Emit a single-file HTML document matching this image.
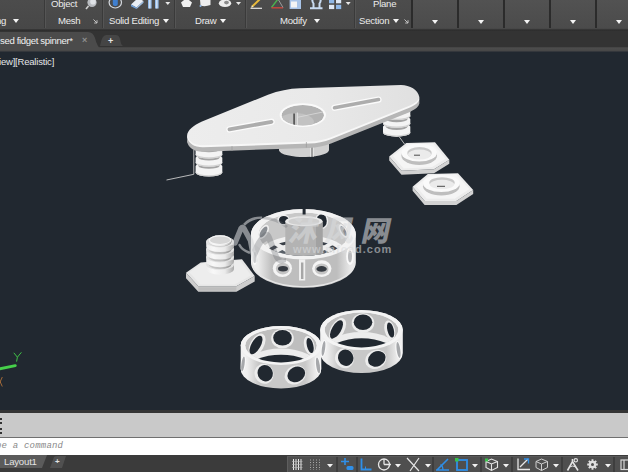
<!DOCTYPE html>
<html><head><meta charset="utf-8">
<style>
html,body{margin:0;padding:0;}
body{width:628px;height:472px;overflow:hidden;position:relative;background:#212830;font-family:"Liberation Sans",sans-serif;}
.abs{position:absolute;}
#ribbon{left:0;top:0;width:628px;height:29px;background:linear-gradient(#4c4c4c,#474747);}
#collapsed{left:412px;top:0;width:216px;height:28px;background:linear-gradient(#525252,#4b4b4b);}
#ribline{left:0;top:29px;width:628px;height:2px;background:linear-gradient(#3a3a3a,#2b2b2b);}
#tabbar{left:0;top:31px;width:628px;height:17px;background:#333;}
#tabline{left:0;top:47px;width:628px;height:5px;background:linear-gradient(#404040,#4c4c4c 25%,#484848 70%,#2a2f36);}
.sep{position:absolute;top:0;width:1px;height:28px;background:#3a3a3a;box-shadow:1px 0 0 #555;}
.sepd{position:absolute;top:0;width:2px;height:28px;background:#2b2b2b;}
.lbl{position:absolute;top:15px;color:#ececec;font-size:9.6px;line-height:12px;white-space:nowrap;letter-spacing:-0.25px;}
.top{top:-2px;}
.tri{position:absolute;width:0;height:0;border-left:3px solid transparent;border-right:3px solid transparent;border-top:4px solid #f4f4f4;}
.stri{position:absolute;width:0;height:0;border-left:2.5px solid transparent;border-right:2.5px solid transparent;border-top:3px solid #e8e8e8;}
#acttab{left:0px;top:32px;width:130px;height:18px;}
#tabtxt{left:0px;top:34px;color:#f0f0f0;font-size:9.6px;line-height:13px;white-space:nowrap;letter-spacing:-0.36px;}
#vlabel{left:-1px;top:56px;color:#e4e6e8;font-size:9.5px;line-height:12px;white-space:nowrap;letter-spacing:-0.2px;}
#cmdhist{left:0;top:410px;width:628px;height:27px;background:#c9c9c9;border-top:3px solid #343434;box-sizing:border-box;}
#cmdline{left:0;top:437px;width:628px;height:18px;background:#fff;border-top:1px solid #707070;box-sizing:border-box;}
#cmdtxt{left:-4px;top:440px;color:#8a8a8a;font-size:9px;line-height:12px;font-family:"Liberation Mono",monospace;font-style:italic;white-space:nowrap;letter-spacing:0.2px;}
#status{left:0;top:455px;width:628px;height:17px;background:#3b3b3b;}
</style></head><body>
<div id="ribbon" class="abs"></div>
<div id="collapsed" class="abs"></div>
<div class="sep" style="left:44px"></div>
<div class="sep" style="left:102px"></div>
<div class="sep" style="left:174px"></div>
<div class="sep" style="left:245px"></div>
<div class="sep" style="left:354px"></div>
<div class="sepd" style="left:411px"></div>
<div class="sepd" style="left:457px"></div>
<div class="sepd" style="left:503px"></div>
<div class="sepd" style="left:549px"></div>
<div class="sepd" style="left:595px"></div>
<div class="lbl" style="left:-4px">ng</div><div class="tri" style="left:13px;top:19px"></div>
<div class="lbl top" style="left:51px">Object</div>
<div class="lbl" style="left:58px">Mesh</div>
<div class="lbl" style="left:109px">Solid Editing</div><div class="tri" style="left:163px;top:19px"></div>
<div class="lbl" style="left:195px">Draw</div><div class="tri" style="left:220px;top:19px"></div>
<div class="lbl" style="left:280px">Modify</div><div class="tri" style="left:314px;top:19px"></div>
<div class="lbl top" style="left:373px">Plane</div>
<div class="lbl" style="left:359px">Section</div><div class="tri" style="left:393px;top:19px"></div>
<div class="tri" style="left:432px;top:20px"></div>
<div class="tri" style="left:478px;top:20px"></div>
<div class="tri" style="left:524px;top:20px"></div>
<div class="tri" style="left:570px;top:20px"></div>
<div class="tri" style="left:616px;top:20px"></div>
<svg class="abs" style="left:0;top:0" width="628" height="14" viewBox="0 0 628 14">
<!-- object icon -->
<circle cx="92" cy="2.500" r="4.600" fill="#b9bcc0"/><circle cx="93" cy="1.800" r="2.800" fill="#dfe2e6"/><path d="M88.500 6 L86 9" stroke="#d0d0d0" stroke-width="1.600"/>
<!-- solid editing icons -->
<ellipse cx="115.300" cy="2.500" rx="6.200" ry="5.500" fill="none" stroke="#d4d8de" stroke-width="1.200"/><rect x="112.800" y="-2" width="5" height="8" rx="2" fill="#3f7fd0"/>
<path d="M131 4.500 L138 -2 L143.500 1 L136.500 7.500 Z" fill="#e9eef5"/><path d="M131 4.500 L136.500 7.500 L136.500 9 L131 6.200 Z" fill="#6fa2dc"/><path d="M136.500 7.500 L143.500 1 V2.800 L136.500 9 Z" fill="#9fc0e6"/>
<rect x="148" y="-1" width="3.600" height="9.500" fill="#8fb8e8"/><rect x="155" y="-1" width="3.600" height="9.500" fill="#8fb8e8"/><rect x="149.200" y="-1" width="1.200" height="9.500" fill="#dfeaf7"/><rect x="156.200" y="-1" width="1.200" height="9.500" fill="#dfeaf7"/>
<path d="M165.300 2h5l-2.500 3z" fill="#e8e8e8"/>
<!-- draw icons -->
<path d="M181 2.500 L186.500 -2 L192 2.500 L190 7 H183 Z" fill="#f1f1f1"/>
<path d="M200 -1 H210.500 V5 Q205 7 200.500 5.500 Z" fill="#ededed"/><circle cx="200.500" cy="6" r="1" fill="#8fb8e8"/>
<ellipse cx="225" cy="3.300" rx="6.200" ry="3.800" fill="#ededed"/><ellipse cx="226.500" cy="2.600" rx="2.400" ry="1.800" fill="#8b8b8b"/>
<path d="M236 2h5l-2.500 3z" fill="#e8e8e8"/>
<!-- modify icons -->
<path d="M252 6.800 L260.500 -1.500" stroke="#e8b93a" stroke-width="2"/><path d="M250.500 8.300 H262" stroke="#e6e6e6" stroke-width="1.200"/><path d="M251 7.800 L253.500 6.800 L252 5.300 Z" fill="#f3e6c0"/>
<path d="M271.500 7.500 L278 -1" stroke="#4bb14f" stroke-width="1.400"/><path d="M271.500 7.800 H283" stroke="#c9473d" stroke-width="1.400"/><path d="M278 -1 L283 7.500" stroke="#9c9c9c" stroke-width="1"/>
<rect x="289.600" y="-1" width="11.400" height="10" fill="#a9c4e8"/><rect x="291" y="1.500" width="6" height="6" fill="#f4f4f4"/>
<path d="M310 8.300 H322.500 M313.500 8 V3.500 Q311.500 1 313 -2 M319.500 8 V3.500 Q321.500 1 320 -2" stroke="#c9dcf2" stroke-width="2" fill="none"/>
<rect x="329" y="-1" width="5.200" height="4.300" fill="#8fb8e8"/><rect x="336" y="-1" width="5.200" height="4.300" fill="#dfe9f6"/><rect x="329" y="4.800" width="5.200" height="4.300" fill="#dfe9f6"/><rect x="336" y="4.800" width="5.200" height="4.300" fill="#8fb8e8"/>
<path d="M345.700 2h5l-2.500 3z" fill="#e8e8e8"/>
</svg>
<svg class="abs" style="left:80px;top:16px" width="360" height="12" viewBox="80 16 360 12"><path d="M93.500 19.500 L96.800 22.800 M97 20.200 V23 H94.200" stroke="#cfcfcf" stroke-width="0.9" fill="none"/><path d="M404.500 19.500 L407.800 22.800 M408 20.200 V23 H405.200" stroke="#cfcfcf" stroke-width="0.9" fill="none"/></svg>
<div id="ribline" class="abs"></div>
<div id="tabbar" class="abs"></div>
<div id="tabline" class="abs"></div>
<svg id="acttab" class="abs" viewBox="0 0 130 18"><path d="M0 0 H88 Q93 0 95 6 Q97 15 102 18 H0 Z" fill="#4b4b4b"/><path d="M100 14 Q102 3 106 3 H116 Q119 3 120 7 Q121 13 123 14 Z" fill="#454545" transform="translate(0,0)"/></svg>
<div id="tabtxt" class="abs">sed fidget spinner*</div>
<div class="abs" style="left:82px;top:34px;color:#8f8f8f;font-size:9px;line-height:13px;font-weight:bold">×</div>
<div class="abs" style="left:108px;top:35px;color:#e8e8e8;font-size:9px;line-height:13px;font-weight:bold">+</div>
<div id="vlabel" class="abs">iew][Realistic]</div>
<svg class="abs" style="left:0;top:51px" width="628" height="359" viewBox="0 51 628 359">
<defs><linearGradient id="fr" x1="0" x2="1" y1="0" y2="0"><stop offset="0" stop-color="#f0f0f0"/><stop offset="0.07" stop-color="#ebebeb"/><stop offset="0.2" stop-color="#bebebe"/><stop offset="0.82" stop-color="#bebebe"/><stop offset="0.94" stop-color="#e6e6e6"/><stop offset="1" stop-color="#ededed"/></linearGradient><linearGradient id="fr2" x1="0" x2="1" y1="0" y2="0"><stop offset="0" stop-color="#f2f2f2"/><stop offset="0.08" stop-color="#eeeeee"/><stop offset="0.22" stop-color="#c8c8c8"/><stop offset="0.8" stop-color="#c8c8c8"/><stop offset="0.93" stop-color="#ececec"/><stop offset="1" stop-color="#f2f2f2"/></linearGradient></defs>
<path d="M166.500 180 L193.800 174.300 V150" fill="none" stroke="#c9c9c9" stroke-width="0.9"/>
<path d="M399.400 137 L404.500 144" fill="none" stroke="#c9c9c9" stroke-width="0.9"/>
<path d="M195.6 165.9 A13.4 4.0 0 0 1 222.3 165.9 V172.8 A13.4 4.0 0 0 1 195.6 172.8 Z" fill="#f4f4f4"/>
<path d="M195.6 171.6 A13.4 4.0 0 0 0 222.3 171.6 V172.8 A13.4 4.0 0 0 1 195.6 172.8 Z" fill="#d2d2d2"/>
<path d="M198.3 162.1 H219.6 V165.9 A10.7 3.2 0 0 1 198.3 165.9 Z" fill="#a3a3a3"/>
<path d="M195.6 157.7 A13.4 4.0 0 0 1 222.3 157.7 V163.1 A13.4 4.0 0 0 1 195.6 163.1 Z" fill="#f4f4f4"/>
<path d="M195.6 161.9 A13.4 4.0 0 0 0 222.3 161.9 V163.1 A13.4 4.0 0 0 1 195.6 163.1 Z" fill="#d2d2d2"/>
<path d="M198.3 153.9 H219.6 V157.7 A10.7 3.2 0 0 1 198.3 157.7 Z" fill="#a3a3a3"/>
<path d="M195.6 149.4 A13.4 4.0 0 0 1 222.3 149.4 V154.9 A13.4 4.0 0 0 1 195.6 154.9 Z" fill="#f4f4f4"/>
<path d="M195.6 153.7 A13.4 4.0 0 0 0 222.3 153.7 V154.9 A13.4 4.0 0 0 1 195.6 154.9 Z" fill="#d2d2d2"/>
<path d="M198.3 145.6 H219.6 V149.4 A10.7 3.2 0 0 1 198.3 149.4 Z" fill="#a3a3a3"/>
<path d="M383.0 126.6 A13.7 4.1 0 0 1 410.3 126.6 V132.9 A13.7 4.1 0 0 1 383.0 132.9 Z" fill="#f4f4f4"/>
<path d="M383.0 131.7 A13.7 4.1 0 0 0 410.3 131.7 V132.9 A13.7 4.1 0 0 1 383.0 132.9 Z" fill="#d2d2d2"/>
<path d="M385.7 123.0 H407.6 V126.6 A10.9 3.3 0 0 1 385.7 126.6 Z" fill="#a3a3a3"/>
<path d="M383.0 118.9 A13.7 4.1 0 0 1 410.3 118.9 V124.0 A13.7 4.1 0 0 1 383.0 124.0 Z" fill="#f4f4f4"/>
<path d="M383.0 122.8 A13.7 4.1 0 0 0 410.3 122.8 V124.0 A13.7 4.1 0 0 1 383.0 124.0 Z" fill="#d2d2d2"/>
<path d="M385.7 115.3 H407.6 V118.9 A10.9 3.3 0 0 1 385.7 118.9 Z" fill="#a3a3a3"/>
<path d="M383.0 111.3 A13.7 4.1 0 0 1 410.3 111.3 V116.3 A13.7 4.1 0 0 1 383.0 116.3 Z" fill="#f4f4f4"/>
<path d="M383.0 115.1 A13.7 4.1 0 0 0 410.3 115.1 V116.3 A13.7 4.1 0 0 1 383.0 116.3 Z" fill="#d2d2d2"/>
<path d="M385.7 107.7 H407.6 V111.3 A10.9 3.3 0 0 1 385.7 111.3 Z" fill="#a3a3a3"/>
<path d="M279 146 V150.500 A25 7 0 0 0 329 149.500 V138 Z" fill="#d0d0d0"/>
<path d="M310.800 146 V157 M313.200 146 V157" stroke="#f4f4f4" stroke-width="0.8"/><path d="M312 146 V157" stroke="#7a7a7a" stroke-width="1.200"/>
<path d="M202.0 127.9 L268.0 101.1 Q283.6 95.1 300.0 94.6 L401.0 91.4 C410.0 91.4 418.0 96.4 419.2 102.9 C419.6 105.9 416.0 109.4 410.0 111.9 L331.0 143.6 Q321.0 147.5 309.0 147.9 L203.0 151.7 C194.0 151.8 188.5 147.4 187.3 142.4 C186.3 137.9 193.0 131.9 202.0 127.9 Z" fill="#b6b6b6"/>
<path d="M187.300 136 V142.4 L419.300 103.4 V97 Z" fill="#b6b6b6"/>
<path d="M202.0 123.5 L268.0 96.7 Q283.6 90.7 300.0 90.2 L401.0 87.0 C410.0 87.0 418.0 92.0 419.2 98.5 C419.6 101.5 416.0 105.0 410.0 107.5 L331.0 139.2 Q321.0 143.1 309.0 143.5 L203.0 147.3 C194.0 147.4 188.5 143.0 187.3 138.0 C186.3 133.5 193.0 127.5 202.0 123.5 Z" fill="#f7f7f7"/>
<defs><linearGradient id="pl" x1="0" x2="1" y1="0" y2="0"><stop offset="0" stop-color="#ededed"/><stop offset="0.55" stop-color="#e9e9e9"/><stop offset="1" stop-color="#e0e0e0"/></linearGradient></defs>
<path d="M202.0 121.5 L268.0 94.7 Q283.6 88.7 300.0 88.2 L401.0 85.0 C410.0 85.0 418.0 90.0 419.2 96.5 C419.6 99.5 416.0 103.0 410.0 105.5 L331.0 137.2 Q321.0 141.1 309.0 141.5 L203.0 145.3 C194.0 145.4 188.5 141.0 187.3 136.0 C186.3 131.5 193.0 125.5 202.0 121.5 Z" fill="url(#pl)"/>
<path d="M232 146V151 M306.400 142V147.500" stroke="#9c9c9c" stroke-width="0.7"/>
<clipPath id="ph"><ellipse cx="302.800" cy="115.300" rx="21.200" ry="10.300"/></clipPath>
<ellipse cx="302.800" cy="115.100" rx="23.200" ry="11.900" fill="#fafafa"/>
<g clip-path="url(#ph)"><ellipse cx="302.800" cy="115.300" rx="21.200" ry="10.300" fill="#b3b3b3"/><ellipse cx="296" cy="122" rx="18" ry="9" fill="#c2c2c2"/>
<path d="M294.100 113.500 V125" stroke="#5a5a5a" stroke-width="1.800"/><path d="M297.400 112.500 V125" stroke="#e4e4e4" stroke-width="0.900"/><path d="M297.400 117.300 L323 112" stroke="#dadada" stroke-width="0.800"/></g>
<path d="M229.500 129.400 L271.500 121.800" stroke="#fbfbfb" stroke-width="6.400" stroke-linecap="round"/>
<path d="M229.500 129.400 L271.500 121.800" stroke="#adadad" stroke-width="3.800" stroke-linecap="round"/>
<path d="M334.500 107.800 L378.500 99.600" stroke="#fbfbfb" stroke-width="6.200" stroke-linecap="round"/>
<path d="M334.500 107.800 L378.500 99.600" stroke="#adadad" stroke-width="3.600" stroke-linecap="round"/>
<path d="M389.2 156.5 L389.2 160.5 L401.5 174.8 L434.0 173.2 L449.3 163.7 L449.3 159.7 L434.0 169.2 L401.5 170.8 Z" fill="#d2d2d2"/>
<path d="M389.2 156.5 L406.3 143.0 L435.0 142.2 L449.3 159.7 L434.0 169.2 L401.5 170.8 Z" fill="#ececec"/>
<path d="M392.8 155.9 L407.9 144.1 L433.1 143.4 L445.7 158.8 L432.2 167.1 L403.6 168.5 Z" fill="#f5f5f5"/>
<ellipse cx="419.2" cy="155.5" rx="17.8" ry="9.5" fill="#bebebe" />
<ellipse cx="419.2" cy="152.7" rx="17.8" ry="8.9" fill="#fafafa" />
<ellipse cx="419.5" cy="153.0" rx="12.2" ry="6.0" fill="#c9c9c9" />
<ellipse cx="419.5" cy="154.6" rx="11.6" ry="5.0" fill="#ebebeb" />
<path d="M414 155.2 H420" stroke="#4a4a4a" stroke-width="1"/>
<path d="M412.6 186.8 L412.6 190.8 L424.6 205.0 L456.4 205.0 L473.2 194.0 L473.2 190.0 L456.4 201.0 L424.6 201.0 Z" fill="#d2d2d2"/>
<path d="M412.6 186.8 L427.8 174.0 L458.0 173.2 L473.2 190.0 L456.4 201.0 L424.6 201.0 Z" fill="#ececec"/>
<path d="M416.1 186.3 L429.5 175.0 L456.1 174.3 L469.5 189.1 L454.7 198.8 L426.7 198.8 Z" fill="#f5f5f5"/>
<ellipse cx="441.3" cy="186.2" rx="18.3" ry="9.2" fill="#bebebe" />
<ellipse cx="441.3" cy="183.4" rx="18.3" ry="8.6" fill="#fafafa" />
<ellipse cx="442.0" cy="182.8" rx="12.7" ry="5.6" fill="#c9c9c9" />
<ellipse cx="442.0" cy="184.4" rx="12.1" ry="4.6" fill="#ebebeb" />
<path d="M437 186.3 H445" stroke="#4a4a4a" stroke-width="1"/>
<defs><linearGradient id="cyl" x1="0" x2="1" y1="0" y2="0"><stop offset="0" stop-color="#ececec"/><stop offset="0.25" stop-color="#f8f8f8"/><stop offset="0.68" stop-color="#eaeaea"/><stop offset="1" stop-color="#a9a9a9"/></linearGradient><linearGradient id="cyl2" x1="0" x2="1" y1="0" y2="0"><stop offset="0" stop-color="#c9c9c9"/><stop offset="0.6" stop-color="#bdbdbd"/><stop offset="1" stop-color="#8f8f8f"/></linearGradient></defs>
<path d="M186.0 272.7 L186.0 278.2 L198.3 291.7 L236.4 291.7 L254.7 281.4 L254.7 275.9 L236.4 286.2 L198.3 286.2 Z" fill="#cdcdcd"/>
<path d="M198.3 287.2 H236.4 V290.7 H198.3 Z" fill="#bdbdbd"/>
<path d="M186.0 272.7 L200.7 262.4 L242.0 259.2 L254.7 275.9 L236.4 286.2 L198.3 286.2 Z" fill="#e6e6e6"/>
<path d="M189.4 272.3 L202.6 263.0 L239.8 260.2 L251.2 275.2 L234.7 284.5 L200.4 284.5 Z" fill="#ededed"/>
<path d="M206.2 264.4 A13.9 5.6 0 0 1 234.0 264.4 V269.1 A13.9 5.6 0 0 1 206.2 269.1 Z" fill="url(#cyl)"/>
<ellipse cx="220.1" cy="264.4" rx="13.9" ry="5.6" fill="#e2e2e2" />
<path d="M208.7 260.6 H231.5 V264.4 A11.4 4.6 0 0 1 208.7 264.4 Z" fill="url(#cyl2)"/>
<path d="M206.2 256.9 A13.9 5.6 0 0 1 234.0 256.9 V261.6 A13.9 5.6 0 0 1 206.2 261.6 Z" fill="url(#cyl)"/>
<ellipse cx="220.1" cy="256.9" rx="13.9" ry="5.6" fill="#e2e2e2" />
<path d="M208.7 253.0 H231.5 V256.9 A11.4 4.6 0 0 1 208.7 256.9 Z" fill="url(#cyl2)"/>
<path d="M206.2 249.4 A13.9 5.6 0 0 1 234.0 249.4 V254.0 A13.9 5.6 0 0 1 206.2 254.0 Z" fill="url(#cyl)"/>
<ellipse cx="220.1" cy="249.4" rx="13.9" ry="5.6" fill="#e2e2e2" />
<path d="M208.7 245.5 H231.5 V249.4 A11.4 4.6 0 0 1 208.7 249.4 Z" fill="url(#cyl2)"/>
<path d="M206.2 241.9 A13.9 5.6 0 0 1 234.0 241.9 V246.5 A13.9 5.6 0 0 1 206.2 246.5 Z" fill="url(#cyl)"/>
<ellipse cx="220.1" cy="241.9" rx="13.9" ry="5.6" fill="#e2e2e2" />
<path d="M208.7 238.0 H231.5 V241.9 A11.4 4.6 0 0 1 208.7 241.9 Z" fill="url(#cyl2)"/>
<path d="M208.7 239.9 A11.4 4.6 0 0 1 231.5 239.9 V241.4 A11.4 4.6 0 0 1 208.7 241.4 Z" fill="url(#cyl)"/>
<ellipse cx="220.1" cy="239.9" rx="11.4" ry="4.6" fill="#f6f6f6" />
<ellipse cx="220.1" cy="240.2" rx="10.1" ry="3.7" fill="#d6d6d6" />
<path d="M251.0 234.3 A52.4 25.2 0 0 1 355.8 234.3 V262.6 A52.4 25.2 0 0 1 251.0 262.6 Z" fill="url(#fr)"/>
<clipPath id="cc"><path d="M251.0 234.3 A52.4 25.2 0 0 0 355.8 234.3 V262.6 A52.4 25.2 0 0 1 251.0 262.6 Z"/></clipPath>
<g clip-path="url(#cc)">
<ellipse cx="282.4" cy="268.2" rx="9.6" ry="8.8" fill="#f4f4f4" />
<ellipse cx="282.8" cy="268.6" rx="6.9" ry="5.9" fill="#c4c4c4" />
<ellipse cx="283.0" cy="268.8" rx="5.0" ry="2.7" fill="#363b42" />
<ellipse cx="321.8" cy="268.6" rx="9.7" ry="8.3" fill="#f4f4f4" />
<ellipse cx="321.6" cy="269.0" rx="6.9" ry="5.5" fill="#c4c4c4" />
<ellipse cx="321.6" cy="268.9" rx="5.2" ry="2.8" fill="#363b42" />
<ellipse cx="254.6" cy="257.5" rx="2.8" ry="7.6" fill="#f9f9f9" />
<ellipse cx="254.8" cy="257.5" rx="1.3" ry="5.4" fill="#b9babc" />
<ellipse cx="350.0" cy="256.5" rx="3.8" ry="8.4" fill="#f9f9f9" />
<ellipse cx="350.0" cy="256.5" rx="2.0" ry="6.0" fill="#b9babc" />
<rect x="299" y="258" width="6.200" height="22.500" fill="#efefef"/>
<rect x="301" y="262.500" width="2.400" height="16.500" fill="#a6a6a6"/>
<path d="M252.0 261.6 A51.4 25.2 0 0 0 354.8 261.6" fill="none" stroke="#e6e6e6" stroke-width="1.200"/>
</g>
<ellipse cx="303.4" cy="234.3" rx="52.4" ry="25.2" fill="#f3f3f3" />
<clipPath id="cci"><ellipse cx="303.4" cy="234.3" rx="45.0" ry="21.7" fill="#000" /></clipPath>
<g clip-path="url(#cci)">
<ellipse cx="303.4" cy="234.3" rx="45.0" ry="21.7" fill="#c8c8c8" />
<ellipse cx="283.5" cy="220.0" rx="6.2" ry="5.4" fill="#f0f0f0" />
<ellipse cx="283.8" cy="220.0" rx="4.8" ry="4.1" fill="#212830" />
<ellipse cx="321.6" cy="221.0" rx="6.6" ry="8.2" fill="#f0f0f0" />
<ellipse cx="321.6" cy="221.0" rx="5.2" ry="6.8" fill="#212830" />
<ellipse cx="263.5" cy="232.0" rx="4.2" ry="8.0" fill="#efefef" transform="rotate(32 263.500 232)"/>
<ellipse cx="263.5" cy="232.0" rx="2.6" ry="6.2" fill="#8a8e93" transform="rotate(32 263.500 232)"/>
<ellipse cx="343.5" cy="231.0" rx="3.6" ry="7.4" fill="#efefef" transform="rotate(-30 343.500 231)"/>
<ellipse cx="343.5" cy="231.0" rx="2.2" ry="5.6" fill="#8a8e93" transform="rotate(-30 343.500 231)"/>
<ellipse cx="303.4" cy="257.6" rx="46.0" ry="22.7" fill="#f1f1f1" />
<ellipse cx="303.4" cy="259.1" rx="41.5" ry="19.2" fill="#3a4048" />
<ellipse cx="303.4" cy="259.1" rx="36.0" ry="16.7" fill="#ececec" />
<ellipse cx="303.4" cy="259.6" rx="30.0" ry="13.7" fill="#596068" />
<path d="M259.4 254.60000000000002 L289.4 260.6 M347.4 254.60000000000002 L317.4 260.6 M273.4 242.3 L293.4 254.3 M333.4 242.3 L313.4 254.3" stroke="#eeeeee" stroke-width="4"/>
<path d="M285.300 221.200 V262 H322.600 V221.200 Z" fill="#b3b3b3"/>
<path d="M316 221.200 V262 H322.600 V221.200 Z" fill="#a2a2a2"/>
<ellipse cx="303.9" cy="221.2" rx="18.6" ry="4.9" fill="#e9e9e9" />
<ellipse cx="303.9" cy="221.4" rx="15.5" ry="3.6" fill="#cfcfcf" />
</g>
<rect x="302.600" y="207.500" width="3" height="7" fill="#222931"/>
<path d="M240.7 345.5 A40.3 19.5 0 0 1 321.3 345.5 V369.0 A40.3 19.5 0 0 1 240.7 369.0 Z" fill="url(#fr2)"/>
<clipPath id="cb1"><path d="M240.7 345.5 A40.3 19.5 0 0 0 321.3 345.5 V369.0 A40.3 19.5 0 0 1 240.7 369.0 Z"/></clipPath>
<g clip-path="url(#cb1)">
<ellipse cx="264.0" cy="373.8" rx="9.4" ry="10.1" fill="#ececec" transform="rotate(-25 264.0 373.8)"/>
<ellipse cx="265.2" cy="373.2" rx="7.6" ry="8.3" fill="#212830" transform="rotate(-25 265.2 373.2)"/>
<ellipse cx="295.3" cy="374.9" rx="11.0" ry="9.2" fill="#ececec" transform="rotate(-28 295.3 374.9)"/>
<ellipse cx="296.3" cy="374.4" rx="9.2" ry="7.4" fill="#212830" transform="rotate(-28 296.3 374.4)"/>
<ellipse cx="243.0" cy="364.0" rx="2.8" ry="8.7" fill="#f8f8f8" transform="rotate(8 243.0 364.0)"/>
<ellipse cx="243.0" cy="364.0" rx="1.6" ry="7.5" fill="#a6a8ab" transform="rotate(8 243.0 364.0)"/>
<ellipse cx="318.0" cy="365.5" rx="3.0" ry="9.2" fill="#f8f8f8" transform="rotate(-8 318.0 365.5)"/>
<ellipse cx="318.0" cy="365.5" rx="1.8" ry="8.0" fill="#a6a8ab" transform="rotate(-8 318.0 365.5)"/>
</g>
<ellipse cx="281.0" cy="345.5" rx="40.3" ry="19.5" fill="#f4f4f4" />
<clipPath id="ci1"><ellipse cx="281.0" cy="345.5" rx="35.8" ry="16.9" fill="#000" /></clipPath>
<g clip-path="url(#ci1)">
<ellipse cx="281.0" cy="345.5" rx="35.8" ry="16.9" fill="#bebebe" />
<ellipse cx="282.5" cy="338.5" rx="11.3" ry="9.8" fill="#ececec" transform="rotate(0 282.5 338.5)"/>
<ellipse cx="282.5" cy="337.7" rx="9.3" ry="7.8" fill="#212830" transform="rotate(0 282.5 337.7)"/>
<ellipse cx="257.0" cy="345.0" rx="6.8" ry="12.5" fill="#ececec" transform="rotate(30 257.0 345.0)"/>
<ellipse cx="256.0" cy="345.0" rx="4.6" ry="10.3" fill="#212830" transform="rotate(30 256.0 345.0)"/>
<ellipse cx="309.3" cy="345.5" rx="5.2" ry="9.8" fill="#ececec" transform="rotate(-14 309.3 345.5)"/>
<ellipse cx="310.1" cy="345.5" rx="3.2" ry="7.8" fill="#212830" transform="rotate(-14 310.1 345.5)"/>
<ellipse cx="281.0" cy="367.0" rx="37.3" ry="18.4" fill="#ececec" />
<ellipse cx="281.0" cy="369.8" rx="32.8" ry="15.1" fill="#212830" />
</g>
<path d="M320.2 330.0 A41.3 20 0 0 1 402.8 330.0 V353.0 A41.3 20 0 0 1 320.2 353.0 Z" fill="url(#fr2)"/>
<clipPath id="cb2"><path d="M320.2 330.0 A41.3 20 0 0 0 402.8 330.0 V353.0 A41.3 20 0 0 1 320.2 353.0 Z"/></clipPath>
<g clip-path="url(#cb2)">
<ellipse cx="344.5" cy="358.3" rx="9.4" ry="10.1" fill="#ececec" transform="rotate(-25 344.5 358.3)"/>
<ellipse cx="345.7" cy="357.7" rx="7.6" ry="8.3" fill="#212830" transform="rotate(-25 345.7 357.7)"/>
<ellipse cx="375.8" cy="359.4" rx="11.0" ry="9.2" fill="#ececec" transform="rotate(-28 375.8 359.4)"/>
<ellipse cx="376.8" cy="358.9" rx="9.2" ry="7.4" fill="#212830" transform="rotate(-28 376.8 358.9)"/>
<ellipse cx="323.5" cy="348.5" rx="2.8" ry="8.7" fill="#f8f8f8" transform="rotate(8 323.5 348.5)"/>
<ellipse cx="323.5" cy="348.5" rx="1.6" ry="7.5" fill="#a6a8ab" transform="rotate(8 323.5 348.5)"/>
<ellipse cx="398.5" cy="350.0" rx="3.0" ry="9.2" fill="#f8f8f8" transform="rotate(-8 398.5 350.0)"/>
<ellipse cx="398.5" cy="350.0" rx="1.8" ry="8.0" fill="#a6a8ab" transform="rotate(-8 398.5 350.0)"/>
</g>
<ellipse cx="361.5" cy="330.0" rx="41.3" ry="20.0" fill="#f4f4f4" />
<clipPath id="ci2"><ellipse cx="361.5" cy="330.0" rx="36.8" ry="17.4" fill="#000" /></clipPath>
<g clip-path="url(#ci2)">
<ellipse cx="361.5" cy="330.0" rx="36.8" ry="17.4" fill="#bebebe" />
<ellipse cx="363.0" cy="323.0" rx="11.3" ry="9.8" fill="#ececec" transform="rotate(0 363.0 323.0)"/>
<ellipse cx="363.0" cy="322.2" rx="9.3" ry="7.8" fill="#212830" transform="rotate(0 363.0 322.2)"/>
<ellipse cx="337.5" cy="329.5" rx="6.8" ry="12.5" fill="#ececec" transform="rotate(30 337.5 329.5)"/>
<ellipse cx="336.5" cy="329.5" rx="4.6" ry="10.3" fill="#212830" transform="rotate(30 336.5 329.5)"/>
<ellipse cx="389.8" cy="330.0" rx="5.2" ry="9.8" fill="#ececec" transform="rotate(-14 389.8 330.0)"/>
<ellipse cx="390.6" cy="330.0" rx="3.2" ry="7.8" fill="#212830" transform="rotate(-14 390.6 330.0)"/>
<ellipse cx="361.5" cy="351.0" rx="38.3" ry="18.9" fill="#ececec" />
<ellipse cx="361.5" cy="353.8" rx="33.8" ry="15.6" fill="#212830" />
</g>
<path d="M-2 369.200 L15.300 365.600" stroke="#46d04a" stroke-width="2.800" stroke-linecap="round"/>
<path d="M13.800 352.800 L17.400 357.200 L21.400 352.300 M17.400 357.200 L16.600 361.600" stroke="#3fc247" stroke-width="1" fill="none"/>
<path d="M-2 377 L2.300 386.500 M2.300 377 L-2 386.500" stroke="#b0703a" stroke-width="0.9" fill="none"/>
<g fill="#60646a" opacity="0.3"><path d="M252 250 Q258 236 265 232 Q270 231 272 237 L279 256 Q281 260 286 258 L286 262 Q278 266 274 258 L267 241 Q263 242 260 249 L256 258 Z"/><path d="M262 216.500 Q278 217 288 226 L286 228 Q276 220 262 219 Z"/></g>
<g fill="#d9dbdd" stroke="#d9dbdd" opacity="0.56">
<g transform="translate(288 240.500) skewX(-12)" stroke="none"><text x="0" y="0" font-family="'Liberation Sans','Noto Sans CJK SC',sans-serif" font-weight="900" font-size="28.500" letter-spacing="7.600">沐风网</text></g>
<text x="293" y="252.700" stroke="none" font-family="'Liberation Sans',sans-serif" font-weight="bold" font-size="11" letter-spacing="1">www.mfcad.com</text>
<path d="M243 224 Q250 216 262 216.500 L262 218.800 Q252 218.800 245 225.800 Z" stroke="none"/>
<path d="M235 243 L241 228.500 Q242.500 226 244 228.500 L250.500 240.500 L252.500 251 L255 260" fill="none" stroke-width="5.500" stroke-linejoin="round" stroke-linecap="round"/>
<path d="M239.500 245 Q242 250 249 252.500" fill="none" stroke-width="2.500" stroke-linecap="round"/>
</g>
</svg>
<div id="cmdhist" class="abs"></div>
<div class="abs" style="left:0;top:418px;width:2px;height:2px;background:#333"></div><div class="abs" style="left:0;top:422px;width:2px;height:2px;background:#333"></div><div class="abs" style="left:0;top:428px;width:2px;height:2px;background:#333"></div><div class="abs" style="left:0;top:432px;width:2px;height:2px;background:#333"></div>
<div id="cmdline" class="abs"></div>
<div id="cmdtxt" class="abs">pe a command</div>
<div id="status" class="abs"></div>
<div class="abs" style="left:287px;top:456px;width:341px;height:16px;background:#4f4f4f;border-left:1px solid #5e5e5e;border-top:1px solid #5a5a5a;box-sizing:border-box"></div>
<svg class="abs" style="left:0;top:455px" width="628" height="17" viewBox="0 455 628 17">
<path d="M0 455 H47 L42 468 H0 Z" fill="#5b5b5b"/>
<path d="M50 468 L54 457 Q55 456 57 456 H66 L62 468 Z" fill="#505050"/>
<g stroke="#3a3a3a" stroke-width="1.5">
<path d="M337 457V472M357 457V472M433 457V472M481 457V472M512 457V472M562 457V472M614 457V472"/>
</g>
<g fill="#f2f2f2">
<path d="M327 464h6l-3 3.5z"/><path d="M395 464h6l-3 3.5z"/><path d="M425 464h6l-3 3.5z"/><path d="M472 464h6l-3 3.5z"/><path d="M503 464h6l-3 3.5z"/><path d="M553 464h6l-3 3.5z"/><path d="M605 464h6l-3 3.5z"/>
</g>
<!-- grid -->
<g stroke="#e8e8e8" stroke-width="1" fill="none">
<path d="M293.5 459V470M296 459V470M298.500 459V470M301 459V470" />
<path d="M292 461.500H302.500M292 464.500H302.500M292 467.500H302.500" stroke="#bdbdbd" stroke-width="0.6"/>
</g>
<g stroke="#a8a8a8" stroke-width="1" stroke-dasharray="1 1.500" fill="none">
<path d="M310.500 459.500V470M313.500 459.500V470M316.500 459.500V470M319.500 459.500V470"/>
</g>
<!-- snap blue -->
<g stroke="#2f8fe8" fill="none" stroke-width="1.6">
<path d="M341 461.500H349M345 458V465"/>
<rect x="346.500" y="466" width="7" height="4" rx="1.500" fill="#2f8fe8" stroke="none"/>
<path d="M361.500 458.500V469.500H371.500" stroke-width="1.800"/>
<path d="M365.500 466.500V469.500" stroke-width="1"/>
</g>
<!-- polar circle -->
<g stroke="#e6e6e6" fill="none" stroke-width="1.300">
<circle cx="384" cy="464.500" r="5.500"/><path d="M384 464.500H391M384 464.500V459"/>
</g>
<!-- X icon -->
<g stroke="#e6e6e6" fill="none" stroke-width="1.200">
<path d="M407 458L419 471M419 458L410 471"/>
</g>
<!-- blue angle -->
<g stroke="#2f8fe8" fill="none" stroke-width="1.600">
<path d="M436 470H449M437 470L448 459"/><path d="M443 470Q443 466 440.500 464.500" stroke-width="1.200"/>
<rect x="457" y="460" width="10" height="10" stroke-width="1.800"/>
</g>
<rect x="455" y="458" width="3.500" height="3.500" fill="#39c24a"/>
<!-- cube w green -->
<g stroke="#e6e6e6" fill="none" stroke-width="1.100">
<path d="M486 461.500L491.500 459L497.500 461.500V467.500L491.500 470.500L486 467.500ZM486 461.500L491.500 464L497.500 461.500M491.500 464V470.500"/>
</g>
<rect x="485" y="458.500" width="3" height="3" fill="#39c24a"/>
<!-- ucs icon -->
<g stroke="#e6e6e6" fill="none" stroke-width="1.300">
<path d="M518 458.500V469.500H530"/><path d="M520 467L528 459" stroke="#e6e6e6"/><path d="M524 459H528.500V463.500" stroke="#2f8fe8"/>
</g>
<g stroke="#cfcfcf" fill="none" stroke-width="1">
<path d="M536 461.500L541.500 459L547.500 461.500V467.500L541.500 470.500L536 467.500ZM536 461.500L541.500 464L547.500 461.500M541.500 464V470.500"/>
</g>
<!-- person -->
<g stroke="#e2e2e2" fill="none" stroke-width="1.600">
<path d="M567.500 470.500L572.500 461.500L578 470.500M572.500 461.500V459"/><circle cx="575.800" cy="460.300" r="1.700" stroke-width="1.100"/><path d="M569.500 467Q572.500 465 576 467" stroke-width="1"/>
</g>
<!-- gear -->
<g fill="#dedede"><circle cx="592.500" cy="464.500" r="3.800"/><g stroke="#dedede" stroke-width="1.900"><path d="M592.500 459.200V469.800M587.200 464.500H597.800M588.800 460.800L596.200 468.200M596.200 460.800L588.800 468.200"/></g><circle cx="592.500" cy="464.500" r="1.500" fill="#4f4f4f"/></g>
<g stroke="#d8d8d8" fill="none" stroke-width="1.200"><rect x="621" y="460" width="9" height="9.500"/><path d="M624 460V469.500"/></g>
</svg>
<div class="abs" style="left:4px;top:455px;color:#e4e4e4;font-size:9.6px;line-height:13px;letter-spacing:-0.2px">Layout1</div>
<div class="abs" style="left:55px;top:455px;color:#e4e4e4;font-size:8px;line-height:13px;font-weight:bold">+</div>
</body></html>
